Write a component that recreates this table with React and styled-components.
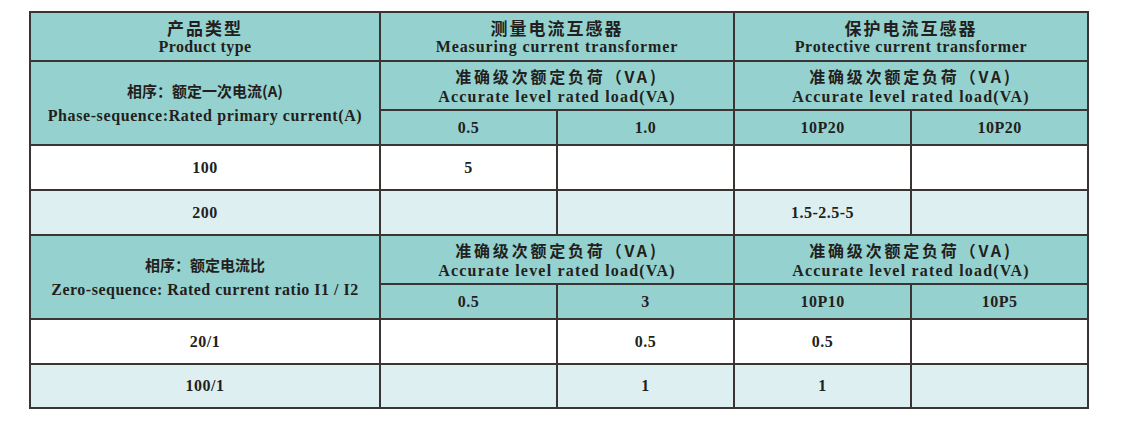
import React from 'react';
import styled, { createGlobalStyle } from 'styled-components';

const GlobalStyle = createGlobalStyle`
  html, body {
    margin: 0;
    padding: 0;
    background: #ffffff;
  }
  body {
    font-family: "Liberation Serif", "Noto Sans CJK SC", serif;
    color: #231f20;
  }
`;

const Page = styled.div`
  padding: 11px 0 0 29px;
`;

const Table = styled.table`
  width: 1058px;
  table-layout: fixed;
  border-collapse: collapse;
  border: 2px solid #3a3432;
`;

const Row = styled.tr`
  height: ${(p) => p.$h}px;
  background: ${(p) => (p.$alt ? '#ddeff1' : '#ffffff')};
`;

const HeadCell = styled.td`
  background: #95d2cf;
  border: 2px solid #3a3432;
  padding: 0;
  text-align: center;
  vertical-align: middle;
`;

const Cell = styled.td`
  border: 2px solid #3a3432;
  padding: 0;
  text-align: center;
  vertical-align: middle;
  font-family: "Liberation Serif", serif;
  font-weight: 700;
  font-size: 16px;
  letter-spacing: 0.5px;
`;

const Cn = styled.div`
  font-family: "Noto Sans CJK SC", sans-serif;
  font-weight: 700;
  font-size: ${(p) => p.$size || 16}px;
  letter-spacing: ${(p) => p.$spacing ?? 2}px;
  line-height: ${(p) => p.$lh || 19}px;
`;

const En = styled.div`
  font-family: "Liberation Serif", serif;
  font-weight: 700;
  font-size: 16px;
  letter-spacing: ${(p) => p.$spacing ?? 1}px;
  line-height: ${(p) => p.$lh || 19}px;
`;

const Sub = styled(HeadCell)`
  font-family: "Liberation Serif", serif;
  font-weight: 700;
  font-size: 16px;
  letter-spacing: 0.5px;
`;

const LoadHead = () => (
  <>
    <Cn $size={16} $spacing={2.8} $lh={21}>准确级次额定负荷（VA)</Cn>
    <En $spacing={1.2}>Accurate level rated load(VA)</En>
  </>
);

const SideHead = ({ cn, en, spacing }) => (
  <>
    <Cn $size={15} $spacing={0} $lh={26}>{cn}</Cn>
    <En $spacing={spacing} $lh={24}>{en}</En>
  </>
);

export default function App() {
  return (
    <Page>
      <GlobalStyle />
      <Table>
        <colgroup>
          <col style={{ width: 350 }} />
          <col style={{ width: 177 }} />
          <col style={{ width: 177 }} />
          <col style={{ width: 177 }} />
          <col style={{ width: 177 }} />
        </colgroup>
        <tbody>
          <Row $h={49}>
            <HeadCell>
              <Cn $size={17} $spacing={2}>产品类型</Cn>
              <En $spacing={0.4}>Product type</En>
            </HeadCell>
            <HeadCell colSpan={2}>
              <Cn $size={17} $spacing={2}>测量电流互感器</Cn>
              <En $spacing={0.9}>Measuring current transformer</En>
            </HeadCell>
            <HeadCell colSpan={2}>
              <Cn $size={17} $spacing={2}>保护电流互感器</Cn>
              <En $spacing={0.7}>Protective current transformer</En>
            </HeadCell>
          </Row>
          <Row $h={49}>
            <HeadCell rowSpan={2}>
              <SideHead cn="相序：额定一次电流(A)" en="Phase-sequence:Rated primary current(A)" spacing={0.6} />
            </HeadCell>
            <HeadCell colSpan={2}><LoadHead /></HeadCell>
            <HeadCell colSpan={2}><LoadHead /></HeadCell>
          </Row>
          <Row $h={35}>
            <Sub>0.5</Sub>
            <Sub>1.0</Sub>
            <Sub>10P20</Sub>
            <Sub>10P20</Sub>
          </Row>
          <Row $h={45}>
            <Cell>100</Cell>
            <Cell>5</Cell>
            <Cell />
            <Cell />
            <Cell />
          </Row>
          <Row $h={45} $alt>
            <Cell>200</Cell>
            <Cell />
            <Cell />
            <Cell>1.5-2.5-5</Cell>
            <Cell />
          </Row>
          <Row $h={49}>
            <HeadCell rowSpan={2}>
              <SideHead cn="相序：额定电流比" en="Zero-sequence: Rated current ratio I1 / I2" spacing={0.5} />
            </HeadCell>
            <HeadCell colSpan={2}><LoadHead /></HeadCell>
            <HeadCell colSpan={2}><LoadHead /></HeadCell>
          </Row>
          <Row $h={35}>
            <Sub>0.5</Sub>
            <Sub>3</Sub>
            <Sub>10P10</Sub>
            <Sub>10P5</Sub>
          </Row>
          <Row $h={45}>
            <Cell>20/1</Cell>
            <Cell />
            <Cell>0.5</Cell>
            <Cell>0.5</Cell>
            <Cell />
          </Row>
          <Row $h={44} $alt>
            <Cell>100/1</Cell>
            <Cell />
            <Cell>1</Cell>
            <Cell>1</Cell>
            <Cell />
          </Row>
        </tbody>
      </Table>
    </Page>
  );
}
